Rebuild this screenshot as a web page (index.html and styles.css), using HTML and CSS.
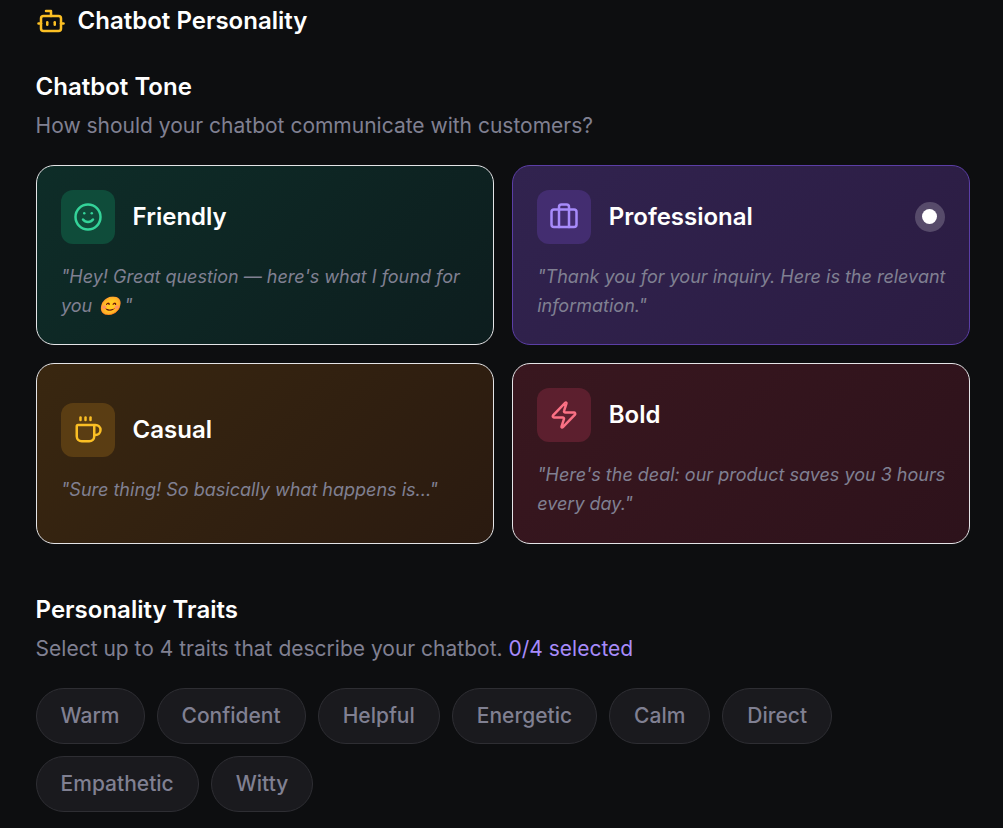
FILE: index.html
```html
<!DOCTYPE html>
<html lang="en">
<head>
<meta charset="utf-8">
<title>Chatbot Personality</title>
<link rel="stylesheet" href="styles.css">
</head>
<body>
<main class="page">
  <header class="title-row">
    <svg class="title-icon" viewBox="0 0 24 24" fill="none" stroke="currentColor" stroke-width="2" stroke-linecap="round" stroke-linejoin="round"><path d="M12 8V4H8"/><rect x="4" y="8" width="16" height="12" rx="2"/><path d="M2 14h2"/><path d="M20 14h2"/><path d="M15 13v2"/><path d="M9 13v2"/></svg>
    <h1 class="title">Chatbot Personality</h1>
  </header>

  <section class="tone">
    <h2 class="heading">Chatbot Tone</h2>
    <p class="sub">How should your chatbot communicate with customers?</p>
    <div class="cards">
      <article class="card card-green">
        <div class="card-head">
          <span class="badge"><svg viewBox="0 0 24 24" fill="none" stroke="currentColor" stroke-width="2" stroke-linecap="round" stroke-linejoin="round"><circle cx="12" cy="12" r="10"/><path d="M8 14s1.500 2 4 2 4-2 4-2"/><line x1="9" y1="9" x2="9.010" y2="9"/><line x1="15" y1="9" x2="15.010" y2="9"/></svg></span>
          <h3 class="card-name">Friendly</h3>
        </div>
        <p class="quote"><span class="quote-line">"Hey! Great question — here's what I found for</span> <span class="quote-end">you</span> <span class="emoji">😊</span> <span class="quote-end">"</span></p>
      </article>
      <article class="card card-purple">
        <div class="card-head">
          <span class="badge"><svg viewBox="0 0 24 24" fill="none" stroke="currentColor" stroke-width="2" stroke-linecap="round" stroke-linejoin="round"><path d="M16 20V4a2 2 0 0 0-2-2h-4a2 2 0 0 0-2 2v16"/><rect x="2" y="6" width="20" height="14" rx="2"/></svg></span>
          <h3 class="card-name">Professional</h3>
          <span class="radio"><span class="radio-dot"></span></span>
        </div>
        <p class="quote">"Thank you for your inquiry. Here is the relevant information."</p>
      </article>
      <article class="card card-amber">
        <div class="card-head">
          <span class="badge"><svg viewBox="0 0 24 24" fill="none" stroke="currentColor" stroke-width="2" stroke-linecap="round" stroke-linejoin="round"><path d="M10 2v2"/><path d="M14 2v2"/><path d="M16 8a1 1 0 0 1 1 1v8a4 4 0 0 1-4 4H7a4 4 0 0 1-4-4V9a1 1 0 0 1 1-1h14a4 4 0 1 1 0 8h-1"/><path d="M6 2v2"/></svg></span>
          <h3 class="card-name">Casual</h3>
        </div>
        <p class="quote">"Sure thing! So basically what happens is..."</p>
      </article>
      <article class="card card-red">
        <div class="card-head">
          <span class="badge"><svg viewBox="0 0 24 24" fill="none" stroke="currentColor" stroke-width="2" stroke-linecap="round" stroke-linejoin="round"><path d="M4 14a1 1 0 0 1-.78-1.630l9.900-10.200a.5.500 0 0 1 .860.460l-1.920 6.020A1 1 0 0 0 13 10h7a1 1 0 0 1 .780 1.630l-9.900 10.200a.5.500 0 0 1-.860-.460l1.920-6.020A1 1 0 0 0 11 14z"/></svg></span>
          <h3 class="card-name">Bold</h3>
        </div>
        <p class="quote">"Here's the deal: our product saves you 3 hours every day."</p>
      </article>
    </div>
  </section>

  <section class="traits">
    <h2 class="heading">Personality Traits</h2>
    <p class="sub">Select up to 4 traits that describe your chatbot. <span class="count">0/4 selected</span></p>
    <div class="chips">
      <span class="chip">Warm</span>
      <span class="chip">Confident</span>
      <span class="chip">Helpful</span>
      <span class="chip">Energetic</span>
      <span class="chip">Calm</span>
      <span class="chip">Direct</span>
      <span class="chip">Empathetic</span>
      <span class="chip">Witty</span>
    </div>
  </section>
</main>
</body>
</html>
```

FILE: styles.css
```css
* { box-sizing: border-box; margin: 0; padding: 0; }
html, body { height: 100%; overflow: hidden; }
body {
  background: #0d0e10;
  color: #fff;
  font-family: Inter, "Liberation Sans", sans-serif;
}
.page { padding: 6px 32px 0 35.6px; }
.title-row { display: flex; align-items: center; gap: 12px; height: 30px; }
.title-icon { width: 30px; height: 30px; color: #fbbf24; flex: none; }
.title { font-size: 24px; font-weight: 600; line-height: 30px; }
.tone { margin-top: 36px; }
.heading { font-size: 24px; font-weight: 600; line-height: 30px; }
.sub { font-size: 21px; line-height: 30px; color: #808092; margin-top: 9px; }
.count { color: #a78bfa; }
.cards { display: grid; grid-template-columns: 458.2px 458.2px; grid-auto-rows: 180.4px; gap: 18px; margin-top: 23.8px; }
.card {
  border: 1px solid #e4e4e7;
  border-radius: 18px;
  padding: 24px;
  display: flex;
  flex-direction: column;
  justify-content: center;
}
.card-green { background: linear-gradient(135deg, #0e2d28, #0d1d1e); }
.card-purple { background: linear-gradient(135deg, #31234f, #2b1c42); border-color: #5b3ea6; }
.card-amber { background: linear-gradient(135deg, #392710, #2a1a10); }
.card-red { background: linear-gradient(135deg, #39171f, #2d121b); }
.card-head { display: flex; align-items: center; gap: 18px; }
.badge { width: 54px; height: 54px; border-radius: 12px; display: flex; align-items: center; justify-content: center; flex: none; }
.badge svg { width: 30px; height: 30px; }
.card-green .badge { background: #0f4c3a; color: #34d399; }
.card-purple .badge { background: #432d70; color: #a78bfa; }
.card-amber .badge { background: #5a3d13; color: #fbbf24; }
.card-red .badge { background: #5c1f2e; color: #fb7185; }
.card-name { font-size: 24px; font-weight: 600; line-height: 30px; }
.radio { margin-left: auto; width: 30px; height: 30px; border-radius: 50%; background: rgba(255,255,255,.2); display: flex; align-items: center; justify-content: center; }
.radio-dot { width: 15px; height: 15px; border-radius: 50%; background: #fff; }
.quote { font-size: 18px; line-height: 29px; font-style: italic; color: #808092; margin: 18px -3px 0 0; padding-left: .4px; }
.quote-line { display: block; }
.emoji { display: inline-block; line-height: 20px; margin: 0 -1px 0 1px; filter: hue-rotate(-22deg) saturate(1.3); }
.traits { margin-top: 51.2px; }
.chips { display: flex; flex-wrap: wrap; gap: 12px; margin-top: 24px; }
.chip { height: 56px; padding: 0 24px; border: 1px solid #2e2e33; border-radius: 28px; background: #1a1a1e; color: #808092; font-size: 21px; font-weight: 500; display: flex; align-items: center; }
```
